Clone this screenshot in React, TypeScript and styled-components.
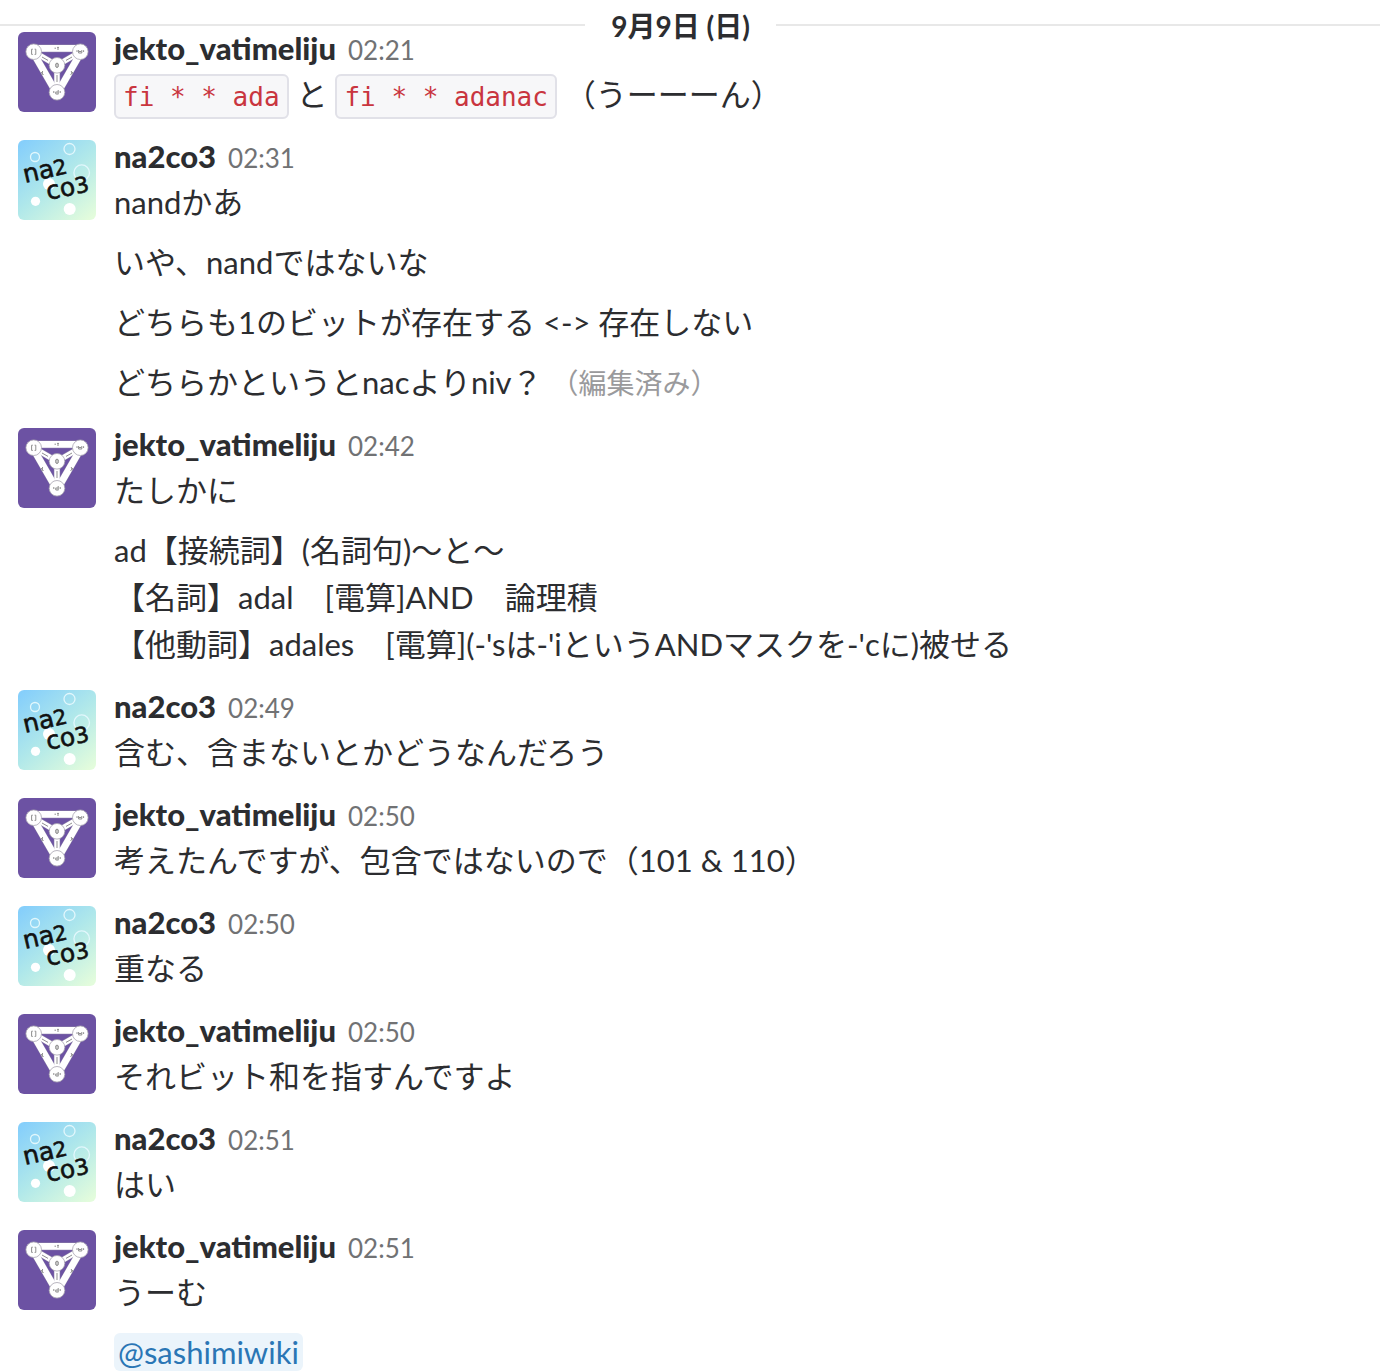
import React from 'react';
import styled, { createGlobalStyle } from 'styled-components';

const GlobalStyle = createGlobalStyle`
  body {
    margin: 0;
    background: #fff;
    color: #2c2d30;
    font-family: Lato, 'Noto Sans CJK JP', sans-serif;
    font-size: 31px;
    line-height: 47px;
  }
`;

const Page = styled.main`
  height: 100vh;
  overflow: hidden;
`;

const DayDivider = styled.div`
  display: flex;
  align-items: center;
  height: 32px;
  padding-top: 18px;
  margin-bottom: -18px;
  box-sizing: border-box;
`;

const Rule = styled.span<{ $grow: number }>`
  flex: ${(p) => p.$grow} 1 0;
  height: 2px;
  background: #e8e8e8;
`;

const DayLabel = styled.h2`
  margin: 0;
  padding: 2px 26px 0;
  font-size: 28px;
  line-height: 32px;
  font-weight: 700;
`;

const MessageList = styled.ol`
  list-style: none;
  margin: 0;
  padding: 18px 18px 0;
`;

const Message = styled.li`
  display: flex;
  align-items: flex-start;
  gap: 18px;
  padding-bottom: 15px;
`;

const AvatarSvg = styled.svg`
  flex: none;
  width: 78px;
  height: 80px;
  border-radius: 6px;
`;

const Body = styled.div`
  flex: 1;
  min-width: 0;
  margin-top: -7px;
  margin-bottom: 7px;
`;

const Header = styled.header`
  display: flex;
  align-items: baseline;
  gap: 12px;
  height: 46px;
`;

const Author = styled.span`
  font-weight: 900;
`;

const Time = styled.time`
  font-size: 26px;
  color: #717274;
`;

const Lines = styled.div`
  display: flex;
  flex-direction: column;
  gap: 13px;
`;

const Line = styled.p`
  margin: 0;
  white-space: pre-wrap;
`;

const Code = styled.code`
  padding: 6px 7px 5px;
  border: 2px solid #e1e1e8;
  border-radius: 6px;
  background: #f7f7f9;
  color: #c9353f;
  font-family: 'DejaVu Sans Mono', monospace;
  font-size: 26px;
  line-height: 1;
`;

const Edited = styled.span`
  font-size: 28px;
  line-height: 1;
  color: #9a9a9c;
`;

const Mention = styled.a`
  padding: 0 4px;
  border-radius: 6px;
  background: #ebf4fb;
  color: #2a76b5;
  text-decoration: none;
`;

const TriangleAvatar = () => (
  <AvatarSvg viewBox="0 0 78 80" role="img" aria-label="jekto_vatimeliju">
    <rect width="78" height="80" fill="#6c52a3" />
    <g stroke="#8d83a8" strokeWidth="7.6" fill="none">
      <path d="M16 16.4H62M16 22L38.5 61M62 22L39.5 61" />
      <path d="M16 20L39 33.3L62 20M39 33V60" strokeWidth="6.4" />
    </g>
    <g stroke="#fff" strokeWidth="6.8" fill="none">
      <path d="M16 16.4H62M16 22L38.5 61M62 22L39.5 61" />
      <path d="M16 20L39 33.3L62 20M39 33V60" strokeWidth="5.4" />
    </g>
    <g fill="#fff" stroke="#a7a3b0" strokeWidth="0.8">
      <circle cx="15.7" cy="19.7" r="7.8" />
      <circle cx="62.3" cy="19.7" r="7.8" />
      <circle cx="39" cy="33.3" r="7.8" />
      <circle cx="39" cy="60.3" r="7.8" />
    </g>
    <g stroke="#8f8f8f" strokeWidth="1" fill="none">
      <path d="M14.8 17.2H13.6V22.4H14.8M16.6 17.2H17.8V22.4H16.6" />
      <path d="M59 18.2V20M60.6 18V21H63.8V18M65.6 18.2V20M61 19.5H63.4" />
      <ellipse cx="39" cy="33.3" rx="1.5" ry="2.2" />
      <path d="M39 31V35.6M35.8 59V61M42.2 59V61M37.6 60H40.2M40.2 58V62.4M37.8 60V62H40" />
      <path d="M36.5 16.2H38M39 15.4H41M39 17H41M24 25L30 28.4M48 28.4L54 25M39 43V50M23 40L25.5 43M24.6 39L24 43M55 40L52.5 43M53.2 39L54.2 42" />
    </g>
  </AvatarSvg>
);

const BubbleAvatar = ({ id }: { id: string }) => (
  <AvatarSvg viewBox="0 0 78 80" role="img" aria-label="na2co3">
    <defs>
      <linearGradient id={id} x1="0.1" y1="0" x2="0.9" y2="1">
        <stop offset="0" stopColor="#86cffb" />
        <stop offset="0.5" stopColor="#b0e8ea" />
        <stop offset="1" stopColor="#e3fcdc" />
      </linearGradient>
    </defs>
    <rect width="78" height="80" fill={`url(#${id})`} />
    <g fill="none" stroke="#e2f7fc" strokeWidth="1.3">
      <circle cx="17" cy="17" r="4.5" />
      <circle cx="51.5" cy="9" r="5.5" />
      <circle cx="63.7" cy="32.7" r="7.8" />
    </g>
    <g fill="#fff">
      <circle cx="31" cy="44" r="6" />
      <circle cx="17.5" cy="61.3" r="4.6" />
      <circle cx="51.7" cy="69" r="6" />
    </g>
    <g fill="#111" stroke="#111" strokeWidth="0.6" fontFamily="'DejaVu Sans', sans-serif" fontSize="25">
      <text transform="translate(7 43) rotate(-13)">
        na<tspan fontSize="21">2</tspan>
      </text>
      <text transform="translate(30 60) rotate(-12)">
        co<tspan fontSize="22">3</tspan>
      </text>
    </g>
  </AvatarSvg>
);

type Entry = { user: 'jekto_vatimeliju' | 'na2co3'; time: string; lines: React.ReactNode[] };

const entries: Entry[] = [
  {
    user: 'jekto_vatimeliju',
    time: '02:21',
    lines: [
      <>
        <Code>fi * * ada</Code> と <Code>fi * * adanac</Code> （うーーーん）
      </>,
    ],
  },
  {
    user: 'na2co3',
    time: '02:31',
    lines: [
      'nandかあ',
      'いや、nandではないな',
      'どちらも1のビットが存在する <-> 存在しない',
      <>
        どちらかというとnacよりniv？ <Edited>（編集済み）</Edited>
      </>,
    ],
  },
  {
    user: 'jekto_vatimeliju',
    time: '02:42',
    lines: [
      'たしかに',
      "ad【接続詞】(名詞句)～と～\n【名詞】adal　[電算]AND　論理積\n【他動詞】adales　[電算](-'sは-'iというANDマスクを-'cに)被せる",
    ],
  },
  { user: 'na2co3', time: '02:49', lines: ['含む、含まないとかどうなんだろう'] },
  { user: 'jekto_vatimeliju', time: '02:50', lines: ['考えたんですが、包含ではないので（101 & 110）'] },
  { user: 'na2co3', time: '02:50', lines: ['重なる'] },
  { user: 'jekto_vatimeliju', time: '02:50', lines: ['それビット和を指すんですよ'] },
  { user: 'na2co3', time: '02:51', lines: ['はい'] },
  {
    user: 'jekto_vatimeliju',
    time: '02:51',
    lines: ['うーむ', <Mention href="#sashimiwiki">@sashimiwiki</Mention>],
  },
];

export default function App() {
  return (
    <Page lang="ja">
      <GlobalStyle />
      <DayDivider>
        <Rule $grow={584} />
        <DayLabel>9月9日 (日)</DayLabel>
        <Rule $grow={603} />
      </DayDivider>
      <MessageList>
        {entries.map((entry, i) => (
          <Message key={i}>
            {entry.user === 'na2co3' ? <BubbleAvatar id={`bubbles-${i}`} /> : <TriangleAvatar />}
            <Body>
              <Header>
                <Author>{entry.user}</Author>
                <Time>{entry.time}</Time>
              </Header>
              <Lines>
                {entry.lines.map((line, j) => (
                  <Line key={j}>{line}</Line>
                ))}
              </Lines>
            </Body>
          </Message>
        ))}
      </MessageList>
    </Page>
  );
}
